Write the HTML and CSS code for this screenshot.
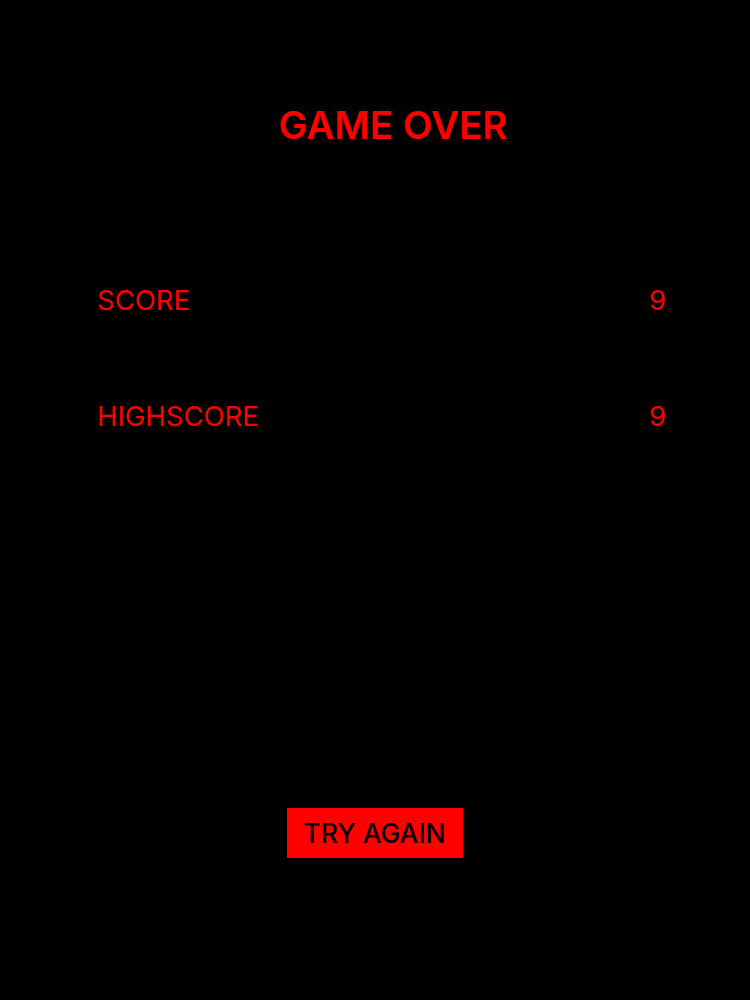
FILE: index.html
```html
<!DOCTYPE html>
<html>
<head>
<meta charset="utf-8">
<link rel="stylesheet" href="styles.css">
</head>
<body>
<main class="screen">
  <h1 class="title">GAME OVER</h1>
  <section class="stats">
    <div class="row"><span class="label">SCORE</span><span class="value">9</span></div>
    <div class="row"><span class="label">HIGHSCORE</span><span class="value">9</span></div>
  </section>
  <div class="actions"><button class="btn">TRY AGAIN</button></div>
</main>
</body>
</html>
```
FILE: styles.css
```css
html, body {
  margin: 0;
  padding: 0;
  background: #000;
}
.screen {
  width: 750px;
  height: 1000px;
  display: flex;
  flex-direction: column;
  font-family: Inter, "Liberation Sans", sans-serif;
  color: #ff0000;
}
.title {
  margin: 102px 0 0;
  padding-left: 36px;
  text-align: center;
  font-size: 38.5px;
  font-weight: 600;
  line-height: 46px;
  letter-spacing: 0;
}
.stats {
  margin-top: 134px;
  padding: 0 84px 0 97px;
  display: flex;
  flex-direction: column;
  gap: 80px;
}
.row {
  display: flex;
  justify-content: space-between;
  font-size: 27.5px;
  line-height: 36px;
  font-weight: 400;
  letter-spacing: 0;
}
.actions {
  margin-top: 374px;
  display: flex;
  justify-content: center;
}
.btn {
  width: 176px;
  height: 50px;
  background: #ff0000;
  border: none;
  color: #000;
  font-family: Inter, "Liberation Sans", sans-serif;
  font-size: 26.5px;
  font-weight: 500;
  letter-spacing: 0;
  padding: 0;
  margin-left: -1px;
}
```
